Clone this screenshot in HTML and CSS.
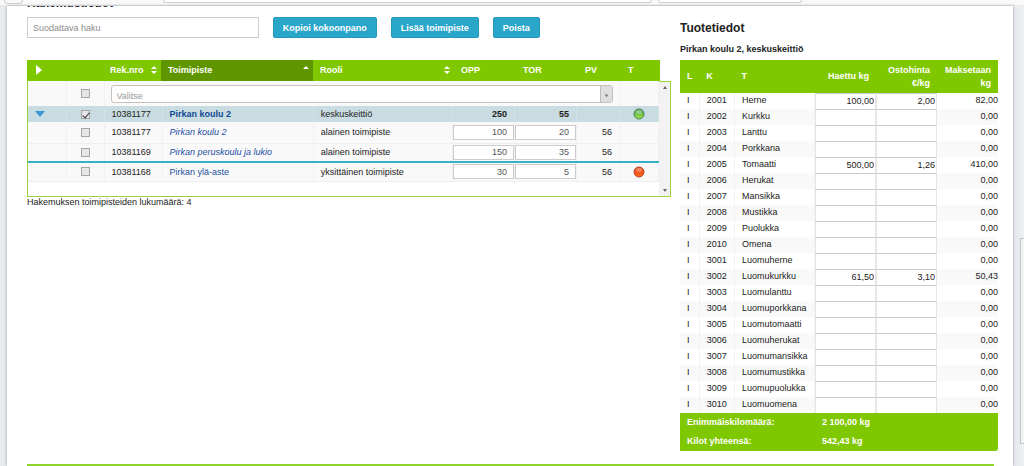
FILE: index.html
```html
<!DOCTYPE html>
<html lang="fi">
<head>
<meta charset="utf-8">
<title>Hakemustiedot</title>
<link rel="stylesheet" href="styles.css">
</head>
<body>
<div class="chrome"><span class="chrome-back"></span><span class="chrome-box chrome-url"></span><span class="chrome-box chrome-search"></span></div>
<div class="viewport">
<main class="sheet">
  <div class="columns">
    <section class="units">
      <h2 class="section-title">Hakemustiedot</h2>
      <div class="toolbar">
        <input class="search" type="text" placeholder="Suodattava haku" aria-label="Suodattava haku">
        <button class="btn" type="button">Kopioi kokoonpano</button>
        <button class="btn" type="button">Lisää toimipiste</button>
        <button class="btn" type="button">Poista</button>
      </div>
      <div class="grid-head">
        <table class="grid">
          <colgroup><col class="c-arrow"><col class="c-check"><col class="c-rek"><col class="c-name"><col class="c-role"><col class="c-num"><col class="c-num"><col class="c-pv"><col class="c-t"></colgroup>
          <thead><tr>
            <th><svg class="expand" viewBox="0 0 6 10"><path d="M0 0 6 5 0 10z"/></svg></th>
            <th></th>
            <th><span class="sortable">Rek.nro <svg class="sort" viewBox="0 0 6 8"><path d="M0 3 3 0 6 3zM0 5H6L3 8z"/></svg></span></th>
            <th class="sorted"><span class="sortable">Toimipiste <svg class="sort" viewBox="0 0 6 8"><path d="M0 3 3 0 6 3z"/></svg></span></th>
            <th><span class="sortable">Rooli <svg class="sort" viewBox="0 0 6 8"><path d="M0 3 3 0 6 3zM0 5H6L3 8z"/></svg></span></th>
            <th>OPP</th><th>TOR</th><th>PV</th><th>T</th>
          </tr></thead>
        </table>
      </div>
      <div class="grid-body">
        <table class="grid">
          <colgroup><col class="c-arrow"><col class="c-check"><col class="c-rek"><col class="c-name"><col class="c-role"><col class="c-num"><col class="c-num"><col class="c-pv"><col class="c-t"></colgroup>
          <tbody>
            <tr class="filter"><td></td><td class="mid"><input class="check" type="checkbox" aria-label="Valitse kaikki"></td>
              <td class="filter-cell" colspan="6"><div class="combo"><select class="combo-select" aria-label="Toimipiste"><option>Valitse</option></select><svg class="combo-arrow" viewBox="0 0 12 17"><path d="M4 9H8L6 12z"/></svg></div></td><td></td></tr>
            <tr class="selected"><td><svg class="collapse" viewBox="0 0 10 6"><path d="M0 0H10L5 6z"/></svg></td><td class="mid"><input class="check" type="checkbox" checked aria-label="Pirkan koulu 2"></td><td>10381177</td><td><a class="link" href="#">Pirkan koulu 2</a></td><td>keskuskeittiö</td><td class="total">250</td><td class="total">55</td><td></td><td class="mid">
              <svg class="lamp" viewBox="0 0 12 12"><defs><linearGradient id="green" x1="0" y1="0" x2="0" y2="1"><stop offset="0" stop-color="#5aa868"/><stop offset=".5" stop-color="#74c048"/><stop offset="1" stop-color="#a8e84a"/></linearGradient></defs><circle cx="6" cy="6" r="5" fill="url(#green)" stroke="#417f52"/><ellipse cx="6" cy="4" rx="3" ry="2" fill="#b4dcba" opacity=".5"/></svg></td></tr>
            <tr class="child"><td></td><td class="mid"><input class="check" type="checkbox" aria-label="Pirkan koulu 2, alainen"></td><td>10381177</td><td><a class="link" href="#">Pirkan koulu 2</a></td><td>alainen toimipiste</td><td class="field-cell"><input class="field" type="text" value="100" aria-label="OPP"></td><td class="field-cell"><input class="field" type="text" value="20" aria-label="TOR"></td><td class="num">56</td><td></td></tr>
            <tr class="child last"><td></td><td class="mid"><input class="check" type="checkbox" aria-label="Pirkan peruskoulu ja lukio"></td><td>10381169</td><td><a class="link" href="#">Pirkan peruskoulu ja lukio</a></td><td>alainen toimipiste</td><td class="field-cell"><input class="field" type="text" value="150" aria-label="OPP"></td><td class="field-cell"><input class="field" type="text" value="35" aria-label="TOR"></td><td class="num">56</td><td></td></tr>
            <tr><td></td><td class="mid"><input class="check" type="checkbox" aria-label="Pirkan ylä-aste"></td><td>10381168</td><td><a class="link" href="#">Pirkan ylä-aste</a></td><td>yksittäinen toimipiste</td><td class="field-cell"><input class="field" type="text" value="30" aria-label="OPP"></td><td class="field-cell"><input class="field" type="text" value="5" aria-label="TOR"></td><td class="num">56</td><td class="mid">
              <svg class="lamp" viewBox="0 0 12 12"><defs><linearGradient id="red" x1="0" y1="0" x2="0" y2="1"><stop offset="0" stop-color="#e05a34"/><stop offset=".5" stop-color="#f24c14"/><stop offset="1" stop-color="#ff7420"/></linearGradient></defs><circle cx="6" cy="6" r="5" fill="url(#red)" stroke="#b04428"/><ellipse cx="6" cy="4" rx="3" ry="2" fill="#f7b79c" opacity=".5"/></svg></td></tr>
          </tbody>
        </table>
        <div class="scroll"><svg class="scroll-arrow" viewBox="0 0 4 3"><path d="M0 3H4L2 0z"/></svg><svg class="scroll-arrow" viewBox="0 0 4 3"><path d="M0 0H4L2 3z"/></svg></div>
      </div>
      <p class="count">Hakemuksen toimipisteiden lukumäärä: 4</p>
    </section>

    <section class="products">
      <h2 class="product-title">Tuotetiedot</h2>
      <h3 class="product-unit">Pirkan koulu 2, keskuskeittiö</h3>
      <table class="items">
        <colgroup><col class="p-l"><col class="p-k"><col class="p-t"><col class="p-n"><col class="p-n"><col class="p-n"></colgroup>
        <thead><tr><th>L</th><th>K</th><th>T</th><th class="right">Haettu kg</th><th class="right">Ostohinta €/kg</th><th class="right">Maksetaan kg</th></tr></thead>
        <tbody>
          <tr><td>I</td><td>2001</td><td>Herne</td><td><input class="amount" type="text" value="100,00" aria-label="Haettu kg, Herne"></td><td><input class="amount" type="text" value="2,00" aria-label="Ostohinta, Herne"></td><td>82,00</td></tr>
          <tr><td>I</td><td>2002</td><td>Kurkku</td><td><input class="amount" type="text" aria-label="Haettu kg, Kurkku"></td><td><input class="amount" type="text" aria-label="Ostohinta, Kurkku"></td><td>0,00</td></tr>
          <tr><td>I</td><td>2003</td><td>Lanttu</td><td><input class="amount" type="text" aria-label="Haettu kg, Lanttu"></td><td><input class="amount" type="text" aria-label="Ostohinta, Lanttu"></td><td>0,00</td></tr>
          <tr><td>I</td><td>2004</td><td>Porkkana</td><td><input class="amount" type="text" aria-label="Haettu kg, Porkkana"></td><td><input class="amount" type="text" aria-label="Ostohinta, Porkkana"></td><td>0,00</td></tr>
          <tr><td>I</td><td>2005</td><td>Tomaatti</td><td><input class="amount" type="text" value="500,00" aria-label="Haettu kg, Tomaatti"></td><td><input class="amount" type="text" value="1,26" aria-label="Ostohinta, Tomaatti"></td><td>410,00</td></tr>
          <tr><td>I</td><td>2006</td><td>Herukat</td><td><input class="amount" type="text" aria-label="Haettu kg, Herukat"></td><td><input class="amount" type="text" aria-label="Ostohinta, Herukat"></td><td>0,00</td></tr>
          <tr><td>I</td><td>2007</td><td>Mansikka</td><td><input class="amount" type="text" aria-label="Haettu kg, Mansikka"></td><td><input class="amount" type="text" aria-label="Ostohinta, Mansikka"></td><td>0,00</td></tr>
          <tr><td>I</td><td>2008</td><td>Mustikka</td><td><input class="amount" type="text" aria-label="Haettu kg, Mustikka"></td><td><input class="amount" type="text" aria-label="Ostohinta, Mustikka"></td><td>0,00</td></tr>
          <tr><td>I</td><td>2009</td><td>Puolukka</td><td><input class="amount" type="text" aria-label="Haettu kg, Puolukka"></td><td><input class="amount" type="text" aria-label="Ostohinta, Puolukka"></td><td>0,00</td></tr>
          <tr><td>I</td><td>2010</td><td>Omena</td><td><input class="amount" type="text" aria-label="Haettu kg, Omena"></td><td><input class="amount" type="text" aria-label="Ostohinta, Omena"></td><td>0,00</td></tr>
          <tr><td>I</td><td>3001</td><td>Luomuherne</td><td><input class="amount" type="text" aria-label="Haettu kg, Luomuherne"></td><td><input class="amount" type="text" aria-label="Ostohinta, Luomuherne"></td><td>0,00</td></tr>
          <tr><td>I</td><td>3002</td><td>Luomukurkku</td><td><input class="amount" type="text" value="61,50" aria-label="Haettu kg, Luomukurkku"></td><td><input class="amount" type="text" value="3,10" aria-label="Ostohinta, Luomukurkku"></td><td>50,43</td></tr>
          <tr><td>I</td><td>3003</td><td>Luomulanttu</td><td><input class="amount" type="text" aria-label="Haettu kg, Luomulanttu"></td><td><input class="amount" type="text" aria-label="Ostohinta, Luomulanttu"></td><td>0,00</td></tr>
          <tr><td>I</td><td>3004</td><td>Luomuporkkana</td><td><input class="amount" type="text" aria-label="Haettu kg, Luomuporkkana"></td><td><input class="amount" type="text" aria-label="Ostohinta, Luomuporkkana"></td><td>0,00</td></tr>
          <tr><td>I</td><td>3005</td><td>Luomutomaatti</td><td><input class="amount" type="text" aria-label="Haettu kg, Luomutomaatti"></td><td><input class="amount" type="text" aria-label="Ostohinta, Luomutomaatti"></td><td>0,00</td></tr>
          <tr><td>I</td><td>3006</td><td>Luomuherukat</td><td><input class="amount" type="text" aria-label="Haettu kg, Luomuherukat"></td><td><input class="amount" type="text" aria-label="Ostohinta, Luomuherukat"></td><td>0,00</td></tr>
          <tr><td>I</td><td>3007</td><td>Luomumansikka</td><td><input class="amount" type="text" aria-label="Haettu kg, Luomumansikka"></td><td><input class="amount" type="text" aria-label="Ostohinta, Luomumansikka"></td><td>0,00</td></tr>
          <tr><td>I</td><td>3008</td><td>Luomumustikka</td><td><input class="amount" type="text" aria-label="Haettu kg, Luomumustikka"></td><td><input class="amount" type="text" aria-label="Ostohinta, Luomumustikka"></td><td>0,00</td></tr>
          <tr><td>I</td><td>3009</td><td>Luomupuolukka</td><td><input class="amount" type="text" aria-label="Haettu kg, Luomupuolukka"></td><td><input class="amount" type="text" aria-label="Ostohinta, Luomupuolukka"></td><td>0,00</td></tr>
          <tr><td>I</td><td>3010</td><td>Luomuomena</td><td><input class="amount" type="text" aria-label="Haettu kg, Luomuomena"></td><td><input class="amount" type="text" aria-label="Ostohinta, Luomuomena"></td><td>0,00</td></tr>
        </tbody>
        <tfoot>
          <tr><td colspan="3">Enimmäiskilomäärä:</td><td colspan="3">2 100,00 kg</td></tr>
          <tr><td colspan="3">Kilot yhteensä:</td><td colspan="3">542,43 kg</td></tr>
        </tfoot>
      </table>
    </section>
  </div>
  <hr class="rule">
</main>
<div class="page-scroll"><div class="thumb"></div></div>
</div>
</body>
</html>
```
FILE: styles.css
```css
* { box-sizing: border-box; }

body {
  margin: 0;
  height: 100vh;
  display: flex;
  flex-direction: column;
  overflow: hidden;
  background: #fff;
  color: #222;
  font: 9px/16px "Liberation Sans", Arial, sans-serif;
}

/* Browser frame */
.chrome {
  display: flex;
  flex: none;
  gap: 6px;
  height: 6px;
  padding: 0 28px 0 4px;
  background: #fafafa;
  border-bottom: 1px solid #e8e8e8;
  align-items: flex-start;
}
.chrome-back { width: 19px; height: 4px; margin-right: 134px; border: 1px solid #d0d0d0; border-top: 0; border-radius: 0 0 9px 9px; }
.chrome-box { height: 3px; border: 1px solid #cfcfcf; border-top: 0; border-radius: 0 0 3px 3px; background: #fff; }
.chrome-url { flex: 489; }
.chrome-search { flex: 143; margin-right: 194px; }

.viewport {
  flex: 1;
  min-height: 0;
  display: flex;
  padding-left: 7px;
  background: #e8ebef;
}
.sheet {
  flex: 1;
  overflow: hidden;
  padding: 0 15px 0 20px;
  background: #fff;
  box-shadow: 0 0 3px #9aa0a6;
}
.page-scroll { width: 4px; margin-left: 7px; padding-top: 232px; background: #eeeff1; }
.thumb { height: 206px; border: 1px solid #bfc2c6; border-right: 0; background: #f4f4f4; }

.columns { display: grid; grid-template-columns: 644fr 318fr; gap: 9px; }

/* Units */
.section-title { margin: -10px 0 7px; font-size: 12px; line-height: 14px; }
.toolbar { display: flex; gap: 14px; margin-bottom: 22px; }
.search {
  width: 36%;
  height: 21px;
  padding: 0 5px;
  border: 1px solid #ccc;
  background: #fff;
  font: inherit;
}
.search::placeholder { color: #8c8c8c; opacity: 1; }
.btn {
  height: 21px;
  padding: 0 9px;
  border: 1px solid #2597bd;
  border-radius: 2px;
  background: #2ba6cb;
  color: #fff;
  font: bold 9px/16px "Liberation Sans", Arial, sans-serif;
}

.grid, .items { width: 100%; table-layout: fixed; border-collapse: collapse; }
.c-arrow, .c-check { width: 38px; }
.c-rek { width: 58px; }
.c-name { width: 24%; }
.c-num { width: 62px; }
.c-pv { width: 43px; }
.c-t { width: 39px; }

.grid th, .grid td { padding: 0 7px; text-align: left; white-space: nowrap; }
.grid th { height: 21px; padding-bottom: 1px; background: #7fc800; color: #fff; }
.grid-head { margin-right: 11px; }
.grid .sorted { background: #5f9600; }
.sortable { display: flex; align-items: center; justify-content: space-between; }
.sort { width: 6px; height: 8px; margin-right: -3px; fill: #fff; }
.expand { display: block; width: 6px; height: 10px; fill: #fff; margin-left: 2px; }
.collapse { display: block; width: 10px; height: 6px; fill: #3b96d2; }

.grid-body {
  display: flex;
  border: 1px solid #9ad43a;
  border-top: 0;
}
.grid-body .grid { flex: 1; margin-bottom: 14px; }
.grid td { height: 19px; border-bottom: 1px solid #efefef; border-right: 1px solid #f1f1f1; background: #f9f9f9; }
.grid .filter td { height: 25px; border-bottom: 0; }
.grid .selected td { height: 16px; background: #c9dce1; border-bottom: 0; border-right-color: #d3e2e6; line-height: 15px; }
.selected + .child td { height: 21px; }
.grid .last td { border-bottom: 2px solid #36b0c4; }
.grid .mid { text-align: center; padding: 0; }
.grid .total { text-align: right; font-weight: bold; }
.grid .num { text-align: right; }
.grid .field-cell { padding: 0; }
.grid .filter-cell { padding: 0 6px; }

.link { color: #1e4fa3; text-decoration: none; }
.selected .link { font-weight: bold; color: #0f4a94; }
.child .link { font-style: italic; }

.check {
  appearance: none;
  display: block;
  width: 9px;
  height: 9px;
  margin: 0 auto;
  border: 1px solid #a5a5a5;
  background: #e6e6e6;
}
.check:checked::before {
  content: "";
  display: block;
  width: 3px;
  height: 6px;
  margin: 0 2px;
  border: solid #333;
  border-width: 0 1px 1px 0;
  transform: rotate(40deg);
}
.lamp { display: block; width: 12px; height: 12px; margin: 0 auto; }

.combo { display: flex; height: 18px; border: 1px solid #c8c0bb; border-radius: 3px; background: #fff; }
.combo-select { appearance: none; flex: 1; padding: 2px 5px 0; border: 0; background: none; color: #999; font: inherit; }
.combo-arrow { width: 12px; border-left: 1px solid #bbb; background: #dedede; fill: #777; }

.field, .amount {
  display: block;
  width: 100%;
  border: 1px solid #ccc;
  background: #fff;
  text-align: right;
  font: 9px "Liberation Sans", Arial, sans-serif;
}
.field { height: 15px; padding: 0 6px; color: #555; }

.scroll {
  width: 11px;
  padding: 4px 0;
  display: flex;
  flex-direction: column;
  align-items: center;
  justify-content: space-between;
  background: #f2f2f3;
  border-top: 1px solid #9ad43a;
}
.scroll-arrow { width: 4px; height: 3px; fill: #666; }
.count { margin: 0; line-height: 10px; }

/* Products */
.product-title { margin: 14px 0 5px; font-size: 12px; line-height: 16px; }
.product-unit { margin: 0 0 3px; font-size: 9px; line-height: 16px; }
.p-l { width: 6%; }
.p-k { width: 11%; }
.p-t { width: 25%; }
.p-n { width: 19%; }
.items th { height: 33px; padding: 0 7px; background: #7fc800; color: #fff; text-align: left; line-height: 13px; }
.items .right { text-align: right; }
.items td { height: 16px; padding: 0 7px 1px; white-space: nowrap; line-height: 15px; border-right: 1px solid #f1f1f1; }
.items tbody td:nth-child(n+4) { padding: 0; text-align: right; border: 0; }
.items tbody td:nth-child(6) { padding-bottom: 1px; }
.items tbody tr:nth-child(even) td { background: #f9f9f9; }
.amount { height: 16px; padding: 0 1px 2px; color: #222; border-color: #ccc #e6e6e6; border-bottom: 0; }
.items tfoot td { height: 19px; padding: 0 7px; border: 0; background: #7fc800; color: #fff; font-weight: bold; line-height: 19px; }
.items tfoot tr:last-child td:last-child { border-bottom-right-radius: 3px; }

.rule { height: 2px; margin: 13px 4px 0 0; border: 0; background: #8ed32a; }
```
